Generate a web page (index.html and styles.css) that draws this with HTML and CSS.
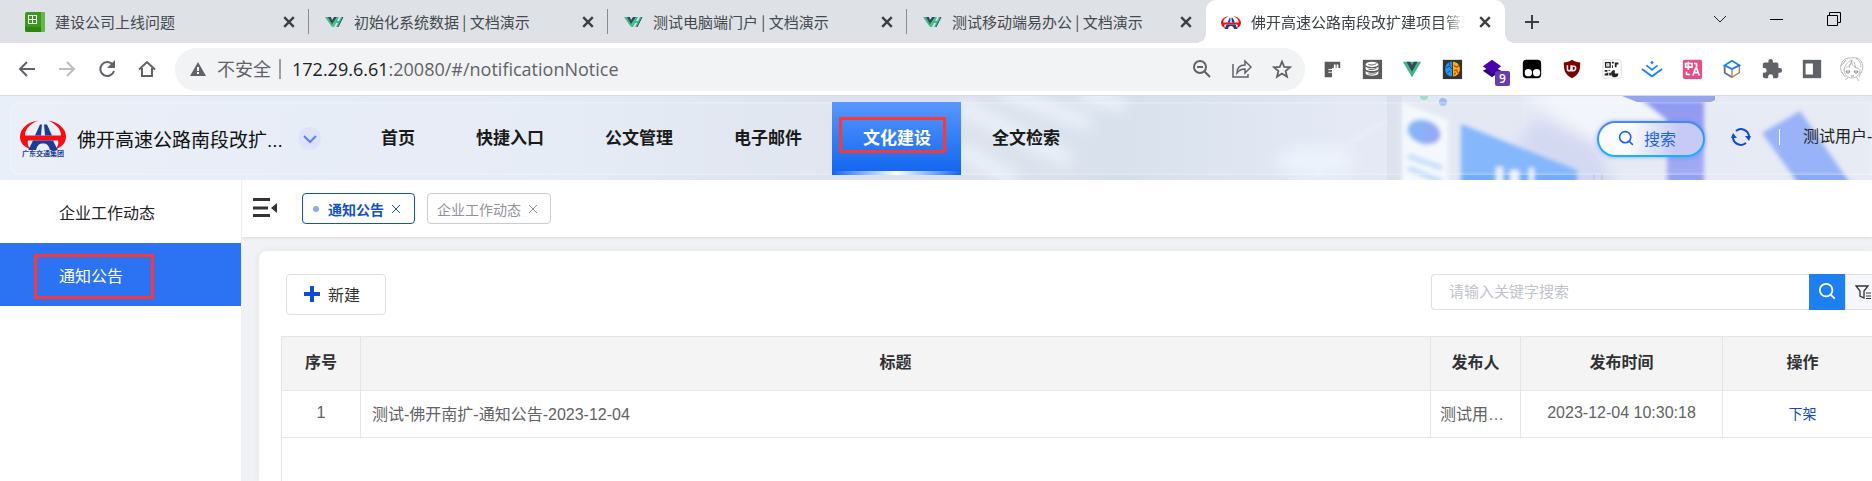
FILE: index.html
```html
<!DOCTYPE html>
<html lang="zh-CN">
<head>
    <meta charset="UTF-8">
    <meta name="viewport" content="width=device-width, initial-scale=1.0">
    <title>佛开高速公路南段改扩建项目管理</title>
    <link rel="stylesheet" href="styles.css">
</head>
<body>
    <!-- shared symbols -->
    <svg class="defs" width="0" height="0" aria-hidden="true">
        <symbol id="i-close" viewBox="0 0 10 10"><path d="M1 1l8 8M9 1l-8 8" fill="none" stroke="currentColor"/></symbol>
        <symbol id="i-vue" viewBox="0 0 20 14">
            <path d="M1 2h4l3 6 3-6h2L8 12z" fill="#41b883"/>
            <path d="M4 2h3l1 3 2-3h3L8 9z" fill="#2f4a5c"/>
            <path d="M13 2h2l-2 4h2l2-4h2l-5 10h-2l2-4h-2l-2 4H8z" fill="#35c08a"/>
            <path d="M19 2l-5 10" stroke="#2f4a5c"/>
        </symbol>
        <symbol id="i-logo" viewBox="0 0 46 30">
            <path d="M18 1C6 3 0 10 0 17c0 7 5 11 11 13-3-3-4-6-3-9h30c1 3 0 6-3 9 6-2 11-6 11-13C46 10 40 3 28 1c9 4 13 9 13 15H5C5 10 9 5 18 1z" fill="#f80d12"/>
            <path d="M20 5h2l-1 11h-6zM24 5h3l5 11h-7z" fill="#1c3c98"/>
            <path d="M13 21h20l5 10h-8c-1-5-3-7-7-7s-6 2-7 7H8z" fill="#1c3c98"/>
        </symbol>
        <symbol id="i-search" viewBox="0 0 20 20"><circle cx="9" cy="9" r="7" fill="none" stroke="currentColor" stroke-width="2"/><path d="M14 14l4 4" stroke="currentColor" stroke-width="2" stroke-linecap="round"/></symbol>
    </svg>

    <div class="tab-strip">
        <div class="tab">
            <svg class="favicon" viewBox="0 0 20 20"><rect width="20" height="20" rx="2" fill="#3a9a1c"/><path d="M16 0h2a2 2 0 012 2v16a2 2 0 01-2 2h-2z" fill="#67b64b"/><path d="M0 15h16v5H2a2 2 0 01-2-2z" fill="#2d8513"/><path d="M3 3h9v9H3z" fill="#fff"/><path d="M4 4h3v3H4zM8 4h3v3H8zM4 8h3v3H4zM8 8h3v3H8z" fill="#3a9a1c"/></svg>
            <span class="tab-title">建设公司上线问题</span>
            <button class="tab-close" aria-label="关闭"><svg><use href="#i-close"/></svg></button>
        </div>
        <div class="tab">
            <svg class="favicon"><use href="#i-vue"/></svg>
            <span class="tab-title">初始化系统数据 | 文档演示</span>
            <button class="tab-close" aria-label="关闭"><svg><use href="#i-close"/></svg></button>
        </div>
        <div class="tab">
            <svg class="favicon"><use href="#i-vue"/></svg>
            <span class="tab-title">测试电脑端门户 | 文档演示</span>
            <button class="tab-close" aria-label="关闭"><svg><use href="#i-close"/></svg></button>
        </div>
        <div class="tab last">
            <svg class="favicon"><use href="#i-vue"/></svg>
            <span class="tab-title">测试移动端易办公 | 文档演示</span>
            <button class="tab-close" aria-label="关闭"><svg><use href="#i-close"/></svg></button>
        </div>
        <div class="tab current">
            <svg class="favicon"><use href="#i-logo"/></svg>
            <span class="tab-title">佛开高速公路南段改扩建项目管理</span>
            <button class="tab-close" aria-label="关闭"><svg><use href="#i-close"/></svg></button>
        </div>
        <button class="new-tab" aria-label="新标签页"><svg width="16" height="16" viewBox="0 0 16 16"><path d="M8 1v14M1 8h14" stroke="#3c4043" stroke-width="2"/></svg></button>
        <div class="window-buttons">
            <button aria-label="搜索标签页"><svg width="14" height="14" viewBox="0 0 14 14"><path d="M1 4l6 6 6-6" fill="none" stroke="#222"/></svg></button>
            <button aria-label="最小化"><svg width="14" height="14" viewBox="0 0 14 14"><path d="M0 7.500h13" stroke="#000"/></svg></button>
            <button aria-label="还原"><svg width="14" height="14" viewBox="0 0 14 14"><path d="M.5 3.500h10v10H.5zM2.500 3V.5h11v10H11" fill="none" stroke="#000"/></svg></button>
        </div>
    </div>

    <div class="toolbar">
        <div class="nav-buttons">
            <button aria-label="后退"><svg width="20" height="20" viewBox="0 0 20 20"><path d="M18 10H3M10 3l-7 7 7 7" fill="none" stroke="#5f6368" stroke-width="2"/></svg></button>
            <button aria-label="前进"><svg width="20" height="20" viewBox="0 0 20 20"><path d="M2 10h15M10 3l7 7-7 7" fill="none" stroke="#bcbec1" stroke-width="2"/></svg></button>
            <button aria-label="刷新"><svg width="20" height="20" viewBox="0 0 20 20"><path d="M16 6a7 7 0 101 6" fill="none" stroke="#5f6368" stroke-width="2"/><path d="M18 1v8h-8z" fill="#5f6368"/></svg></button>
            <button aria-label="主页"><svg width="20" height="20" viewBox="0 0 20 20"><path d="M2 10.500L10 3l8 7.500M5 9v8h10V9" fill="none" stroke="#5f6368" stroke-width="2"/></svg></button>
        </div>
        <div class="omnibox">
            <svg width="16" height="14" viewBox="0 0 16 14"><path d="M8 0l8 14H0z" fill="#5f6368"/><path d="M8 5v4M8 10v2" stroke="#fff" stroke-width="2"/></svg>
            <span class="insecure">不安全</span>
            <span class="url"><b>172.29.6.61</b>:20080/#/notificationNotice</span>
            <div class="omnibox-actions">
                <button aria-label="缩放"><svg width="20" height="20" viewBox="0 0 20 20"><circle cx="8" cy="8" r="6" fill="none" stroke="#5f6368" stroke-width="2"/><path d="M5 8h6M12 12l6 6" stroke="#5f6368" stroke-width="2"/></svg></button>
                <button aria-label="分享"><svg width="20" height="20" viewBox="0 0 20 20"><path d="M1 5v13h15v-3" fill="none" stroke="#5f6368" stroke-width="1.500"/><path d="M5 14c0-5 3-8 8-8V2l6 6-6 6v-4c-4 0-6 1-8 4z" fill="none" stroke="#5f6368" stroke-width="1.500"/></svg></button>
                <button aria-label="收藏"><svg width="20" height="20" viewBox="0 0 20 20"><path d="M10 2.500l2.200 5.300 5.800.5-4.400 3.700 1.400 5.700-5-3.100-5 3.100 1.400-5.700L2 8.300l5.800-.5z" fill="none" stroke="#5f6368" stroke-width="1.800"/></svg></button>
            </div>
        </div>
        <div class="extensions">
            <button aria-label="标尺"><svg viewBox="0 0 24 24"><path d="M4 4h17v7h-2V7h-2v4h-1V7h-2v4h-2v1H8v1h4v2H8v1h4v5H4z" fill="#5a5a5a"/></svg></button>
            <button aria-label="数据库"><svg viewBox="0 0 24 24"><rect x="2" y="2" width="21" height="21" fill="#5b5b5b"/><ellipse cx="12" cy="7" rx="7" ry="3" fill="#fff"/><path d="M5 9c1 3 13 3 14 0v3c-1 3-13 3-14 0zM5 14c1 3 13 3 14 0v3c-1 3-13 3-14 0z" fill="#fff"/><path d="M8 7c2 1 6 1 9-1M8 12c2 1 6 1 9-1M8 17c2 1 6 1 9-1" fill="none" stroke="#5b5b5b"/></svg></button>
            <button aria-label="Vue"><svg viewBox="0 0 24 24"><path d="M2 4h20L12 21z" fill="#41b883"/><path d="M6 4h4l2 4 2-4h4l-6 11z" fill="#34495e"/></svg></button>
            <button aria-label="大脑"><svg viewBox="0 0 24 24"><rect x="2" y="2" width="21" height="21" fill="#333"/><path d="M12 4c-10 0-10 16 0 16z" fill="#2497ee"/><path d="M13 4c10 0 10 16 0 16z" fill="#f6b60e"/><path d="M5 11l4-2 3 3M7 16l3-2M9 5l1 4" stroke="#173b8f" fill="none"/><path d="M14 8l3 2 3-2M14 14l3-1 2 4M16 16l-2 2" stroke="#d44c10" stroke-width="1.500" fill="none"/></svg></button>
            <button aria-label="图层"><svg viewBox="0 0 24 24"><path d="M2 14l10-5 10 5-10 7z" fill="#2a0878"/><path d="M2 9l10-7 10 7-10 8z" fill="#4a04ae"/></svg><span class="badge">9</span></button>
            <button aria-label="脚本"><svg viewBox="0 0 24 24"><rect x="2" y="2" width="20" height="20" rx="4"/><circle cx="8" cy="16" r="4" fill="#fff"/><circle cx="17" cy="16" r="4" fill="#fff"/></svg></button>
            <button aria-label="uBlock"><svg viewBox="0 0 24 24"><path d="M12 2c3 2 6 3 9 3 0 8-1 13-9 17C4 18 3 13 3 5c3 0 6-1 9-3z" fill="#800000"/><path d="M7 8v4q0 2 2 2t2-2V8M12 14V9h2a2 2 0 012 2q0 3-3 3z" fill="none" stroke="#fff" stroke-width="1.600"/></svg></button>
            <button aria-label="二维码"><svg viewBox="0 0 24 24"><rect x="2" y="2" width="20" height="20" rx="2" fill="#fff" stroke="#ddd"/><path d="M5 5h5v5H5z" fill="none" stroke="#222" stroke-width="1.500"/><path d="M7 7h1v1H7zM12 4h2v2h-2zM12 8h1v3h-1zM15 5h4v2h-2v3h-2zM4 13h3v2H4zM8 13h2v1H8zM6 16h2v3H4v-2h2zM9 16h2v3H9z" fill="#222"/><path d="M15 13a4 4 0 104 4h-4z" fill="#222"/></svg></button>
            <button aria-label="掘金"><svg viewBox="0 0 24 24"><path d="M12 3l2 2-2 2-2-2z" fill="#1e80ff"/><path d="M6 8l6 5 6-5M1 12l11 8 11-8" fill="none" stroke="#1e80ff" stroke-width="2"/></svg></button>
            <button aria-label="翻译"><svg viewBox="0 0 24 24"><rect x="2" y="2" width="21" height="21" rx="2" fill="#ea4c89"/><path d="M5 6h7v4H5zM8 4v9M6 15v3h4M14 6h3v4M13 19l3-8h1l3 8M14 16h5" fill="none" stroke="#fff" stroke-width="1.800"/></svg></button>
            <button aria-label="立方体"><svg viewBox="0 0 24 24"><path d="M4 8v8l8 5" fill="none" stroke="#647186" stroke-width="2"/><path d="M12 12v9l8-5V8z" fill="none" stroke="#b9795c" stroke-width="1.500"/><path d="M12 3l8 5-8 4-8-4z" fill="none" stroke="#1880ff" stroke-width="2"/></svg></button>
            <button aria-label="扩展程序"><svg viewBox="0 0 24 24"><path d="M20.500 11H19V7a2 2 0 00-2-2h-4V3.500a2.500 2.500 0 00-5 0V5H4a2 2 0 00-2 2v3.800h1.500a2.700 2.700 0 010 5.400H2V20a2 2 0 002 2h3.800v-1.500a2.700 2.700 0 015.400 0V22H17a2 2 0 002-2v-4h1.500a2.500 2.500 0 000-5z" fill="#5f6368"/></svg></button>
            <button aria-label="侧边栏"><svg viewBox="0 0 24 24"><path d="M2 2h20v20H2z" fill="#5f6368"/><path d="M5 6h8v12H5z" fill="#fff"/></svg></button>
            <button aria-label="用户"><svg class="avatar" viewBox="0 0 26 26"><g fill="none" stroke="#aaa" stroke-width=".8"><path d="M3 17C-1 9 4 1 12 2c9-2 15 6 10 15M5 14c1-6 5-9 8-10-1 4-4 7-6 8M13 4c-1 4 1 7 7 9M2 10l5-6M17 2c3 2 5 5 5 9M5 13c0 6 4 9 8 9s8-3 8-9M3 16l3 5M22 16l-2 5M9 22l-3 2M17 21l3 4M13 5l-3 7M15 6l2 6M4 8l2-3"/><path d="M7 15h4l-1 2H8zM15 15h4l-1 2h-2zM12 20h3" stroke="#777"/></g></svg></button>
        </div>
    </div>

    <header class="app-header">
        <svg class="header-art" viewBox="0 0 1872 84" preserveAspectRatio="xMaxYMid slice" aria-hidden="true">
            <defs>
                <filter id="soft" x="-20%" y="-20%" width="140%" height="140%"><feGaussianBlur stdDeviation="2"/></filter>
                <filter id="softer" x="-20%" y="-50%" width="140%" height="200%"><feGaussianBlur stdDeviation="7"/></filter>
                <linearGradient id="sky" x1="0" x2="1">
                    <stop offset="0" stop-color="#e9eff8"/>
                    <stop offset=".3" stop-color="#e4ebf5"/>
                    <stop offset=".45" stop-color="#dde3ee"/>
                    <stop offset=".6" stop-color="#d5dfeb"/>
                    <stop offset=".72" stop-color="#e2e8f5"/>
                    <stop offset="1" stop-color="#e6eaf4"/>
                </linearGradient>
                <linearGradient id="tower" x2="0" y2="1"><stop offset="0" stop-color="#7c88f0"/><stop offset="1" stop-color="#97a6f4"/></linearGradient>
                <linearGradient id="eye"><stop offset="0" stop-color="#6cb0f8"/><stop offset="1" stop-color="#8c98f5"/></linearGradient>
            </defs>
            <rect width="1872" height="84" fill="url(#sky)"/>
            <g filter="url(#softer)" stroke="#eef4fc" fill="none">
                <path d="M960 10l110 55M1000-6l90 34M960 54l55 30M1080-4l45 14" stroke-width="12"/>
            </g>
            <path d="M1315 84q20-35 75-60" fill="none" stroke="#ecf2fb" stroke-width="2" filter="url(#soft)"/>
            <ellipse cx="1315" cy="65" rx="40" ry="16" fill="#ebf2fc" filter="url(#softer)"/>
            <path d="M1387 0h15v84h-15z" fill="#d6deeb" opacity=".8"/>
            <path d="M1402 0h120v84h-120z" fill="#e1e7f3"/>
            <g filter="url(#softer)">
                <path d="M1522-5h110l60 30v20h-100z" fill="#f4f6fd"/>
                <path d="M1535 22l60 24 20 45h-40l-60-40z" fill="#cfd5f1"/>
            </g>
            <g filter="url(#soft)">
                <path d="M1402 6l46 18v64h-46z" fill="#f5fafe"/>
                <ellipse cx="1424" cy="36" rx="17" ry="12" fill="url(#eye)" transform="rotate(18 1424 36)"/>
                <path d="M1408 60l34 12M1408 72l34 14" stroke="#c2dcf8" stroke-width="6"/>
                <path d="M1461 28l116 46v20h-116z" fill="#72adfd"/>
                <path d="M1496 71h7v20h-7zM1510 74h9v17h-9zM1529 72h5v18h-5z" fill="#eef4ff"/>
                <path d="M1637 0h67v95h-37V24z" fill="url(#tower)"/>
                <path d="M1762 37l38-22 55 79h-52z" fill="#8aa9f8"/>
            </g>
            <path d="M1622 0h93v4l-4 2h-74z" fill="#96a5f2"/>
            <path d="M1594 78v6M1602 78v6" stroke="#b7bfe4"/>
            <circle cx="1424" cy="0" r="4" fill="#9ddec2"/>
            <circle cx="1443" cy="6" r="4" fill="#9fbaf0"/>
        </svg>
        <div class="header-inner">
            <div class="brand">
                <div class="brand-logo">
                    <svg width="46" height="31"><use href="#i-logo"/></svg>
                    <span>广东交通集团</span>
                </div>
                <h1>佛开高速公路南段改扩...</h1>
                <button class="brand-more" aria-label="切换项目"><svg width="14" height="10" viewBox="0 0 14 10"><path d="M1 2l6 6 6-6" fill="none" stroke="#5a83ff" stroke-width="2"/></svg></button>
            </div>
            <nav class="main-nav">
                <a href="#">首页</a>
                <a href="#">快捷入口</a>
                <a href="#">公文管理</a>
                <a href="#">电子邮件</a>
                <a href="#" class="active">文化建设</a>
                <a href="#">全文检索</a>
            </nav>
            <div class="header-right">
                <button class="global-search"><svg width="16" height="16"><use href="#i-search"/></svg>搜索</button>
                <button class="refresh" aria-label="刷新"><svg width="20" height="20" viewBox="0 0 20 20"><path d="M2 11a8 8 0 0013 5M18 9A8 8 0 005 4" fill="none" stroke="#0d4bd8" stroke-width="2"/><path d="M2 6l4 5H0zM18 14l-4-5h6z" fill="#0d4bd8"/></svg></button>
                <span class="user">测试用户-</span>
            </div>
        </div>
    </header>

    <div class="layout">
        <aside class="sidebar">
            <a href="#">企业工作动态</a>
            <a href="#" class="active">通知公告</a>
        </aside>

        <main class="main">
            <div class="tags-bar">
                <button class="fold" aria-label="收起菜单"><svg width="24" height="20" viewBox="0 0 24 20"><path d="M0 1.500h17M0 10h15M0 17.500h17" stroke="#333" stroke-width="3"/><path d="M24 5v10l-6-5z" fill="#333"/></svg></button>
                <span class="tag active">通知公告<button aria-label="关闭"><svg><use href="#i-close"/></svg></button></span>
                <span class="tag">企业工作动态<button aria-label="关闭"><svg><use href="#i-close"/></svg></button></span>
            </div>

            <section class="card">
                <div class="actions">
                    <button class="create"><svg width="16" height="16" viewBox="0 0 16 16"><path d="M8 0v16M0 8h16" stroke="#0d4bd2" stroke-width="4"/></svg>新建</button>
                    <div class="search">
                        <input type="text" placeholder="请输入关键字搜索" aria-label="关键字">
                        <button class="search-btn" aria-label="搜索"><svg width="20" height="20"><use href="#i-search"/></svg></button>
                        <button class="filter-btn" aria-label="筛选"><svg width="16" height="16" viewBox="0 0 16 16"><path d="M1 2h12L9 7v7l-4-2V7z" fill="none" stroke="#333" stroke-width="1.300"/><path d="M11 9h5M11 12h5M11 14.500h5" stroke="#333"/></svg></button>
                    </div>
                </div>
                <div class="table-wrap">
                    <table>
                        <thead>
                            <tr>
                                <th class="col-index">序号</th>
                                <th>标题</th>
                                <th class="col-user">发布人</th>
                                <th class="col-time">发布时间</th>
                                <th class="col-op">操作</th>
                            </tr>
                        </thead>
                        <tbody>
                            <tr>
                                <td>1</td>
                                <td class="title">测试-佛开南扩-通知公告-2023-12-04</td>
                                <td class="publisher">测试用户-1</td>
                                <td>2023-12-04 10:30:18</td>
                                <td><a href="#">下架</a></td>
                            </tr>
                        </tbody>
                    </table>
                </div>
            </section>
        </main>
    </div>
</body>
</html>
```
FILE: styles.css
```css
* {
    margin: 0;
    padding: 0;
    box-sizing: border-box;
}

body {
    font-family: "Liberation Sans", "Noto Sans CJK SC", sans-serif;
    font-size: 16px;
    color: #333;
    height: 100vh;
    display: flex;
    flex-direction: column;
    overflow: hidden;
    background: #f0f2f5;
}

button {
    border: none;
    background: none;
    font: inherit;
    color: inherit;
    display: flex;
    align-items: center;
    justify-content: center;
    cursor: pointer;
}

a {
    color: inherit;
    text-decoration: none;
}

.defs {
    position: absolute;
}

/* browser tabs */
.tab-strip {
    display: flex;
    height: 43px;
    flex-shrink: 0;
    padding-left: 10px;
    background: #dee1e6;
    font-family: "Noto Sans CJK SC", sans-serif;
    font-size: 15px;
    color: #45494d;
}

.tab {
    display: flex;
    align-items: center;
    flex: 0 1 299px;
    min-width: 0;
    padding: 0 14px 0 15px;
    background: linear-gradient(#888c91, #888c91) right center / 1px 25px no-repeat;
}

.tab.last {
    background: none;
}

.tab.current {
    position: relative;
    background: #fff;
    border-radius: 10px 10px 0 0;
}

/* outward curves at the foot of the selected tab */
.tab.current::before,
.tab.current::after {
    content: '';
    position: absolute;
    bottom: 0;
    width: 10px;
    height: 10px;
}

.tab.current::before {
    right: 100%;
    background: radial-gradient(circle at 0 0, transparent 10px, #fff 10px);
}

.tab.current::after {
    left: 100%;
    background: radial-gradient(circle at 100% 0, transparent 10px, #fff 10px);
}

.favicon {
    width: 20px;
    height: 20px;
    margin-right: 10px;
    flex-shrink: 0;
}

.tab-title {
    flex: 1;
    white-space: nowrap;
    overflow: hidden;
    margin-right: 14px;
}

.tab.current .tab-title {
    color: #3c4043;
    mask-image: linear-gradient(to right, #000 90%, transparent);
}

.tab-close {
    width: 12px;
    height: 12px;
    color: #3c4043;
}

.tab-close svg {
    width: 12px;
    height: 12px;
    stroke-width: 2;
}

.new-tab {
    width: 54px;
}

.window-buttons {
    display: flex;
    margin-left: auto;
    margin-right: 10px;
    height: 37px;
}

.window-buttons button {
    width: 57px;
}

/* address bar */
.toolbar {
    display: flex;
    align-items: center;
    height: 53px;
    flex-shrink: 0;
    padding: 0 0 0 7px;
    background: #fff;
    border-bottom: 1px solid #d8d9db;
}

.nav-buttons {
    display: flex;
    width: 168px;
}

.nav-buttons button,
.extensions button,
.omnibox-actions button {
    width: 40px;
    height: 40px;
}

.omnibox {
    flex: 1;
    display: flex;
    align-items: center;
    height: 43px;
    padding: 0 3px 0 15px;
    border-radius: 22px;
    background: #f1f3f4;
    font-family: "Open Sans", "Noto Sans CJK SC", sans-serif;
    font-size: 18px;
    color: #5f6368;
}

.insecure {
    margin-left: 11px;
    padding-right: 8px;
    line-height: 20px;
    border-right: 2px solid #9a9da1;
}

.url {
    margin-left: 11px;
}

.url b {
    font-weight: 400;
    color: #202124;
}

.omnibox-actions {
    display: flex;
    margin-left: auto;
}

.extensions {
    display: flex;
    padding-left: 7px;
}

.extensions button {
    position: relative;
}

.extensions svg {
    width: 22px;
    height: 22px;
}

.extensions .avatar {
    width: 26px;
    height: 26px;
}

.badge {
    position: absolute;
    right: 2px;
    bottom: 3px;
    width: 15px;
    height: 15px;
    border-radius: 2px;
    background: #673ab7;
    color: #fff;
    font: 600 12px/15px "Open Sans", sans-serif;
}

/* app header */
.app-header {
    position: relative;
    height: 84px;
    flex-shrink: 0;
    padding: 6px 0 5px 10px;
    overflow: hidden;
}

.header-art {
    position: absolute;
    inset: 0;
    width: 100%;
    height: 100%;
}

.header-inner {
    position: relative;
    display: flex;
    height: 100%;
    padding-left: 10px;
    border-radius: 10px 0 0 10px;
    background: rgba(240, 242, 245, 0.15);
    box-shadow: inset 0 0 3px 1px rgba(255, 255, 255, 0.4);
}

.brand {
    display: flex;
    align-items: center;
    width: 330px;
}

.brand-logo {
    width: 46px;
    text-align: center;
    color: #1c3c98;
}

.brand-logo svg {
    display: block;
}

.brand-logo span {
    display: block;
    font-size: 7px;
    font-weight: 700;
    line-height: 8px;
    white-space: nowrap;
}

.brand h1 {
    width: 208px;
    margin-left: 11px;
    font-size: 19px;
    font-weight: 400;
    color: #111;
    white-space: nowrap;
}

.brand-more {
    width: 23px;
    height: 23px;
    margin-left: 13px;
    border-radius: 50%;
    background: #dde4f8;
}

.main-nav {
    display: flex;
}

.main-nav a {
    display: flex;
    align-items: center;
    padding: 0 30px 4px 31px;
    font-size: 17px;
    font-weight: 700;
    color: #1a1a1a;
    white-space: nowrap;
}

.main-nav .active {
    position: relative;
    color: #fff;
    background:
        linear-gradient(to right, transparent, #fff, transparent) bottom / 100% 4px no-repeat,
        linear-gradient(#5897ff, #1065ee);
}

/* red highlight frames */
.main-nav .active::after,
.sidebar .active::after {
    content: '';
    position: absolute;
    border: 3px solid #fb3838;
}

.main-nav .active::after {
    inset: 15px 15px 22px 7px;
}

.header-right {
    display: flex;
    align-items: center;
    margin-left: auto;
    color: #222;
}

.global-search {
    width: 108px;
    height: 36px;
    gap: 10px;
    padding: 0 8px 2px 0;
    border: 2px solid transparent;
    border-radius: 18px;
    background:
        linear-gradient(100deg, #fafcff 30%, #c7c9f6 75%) padding-box,
        linear-gradient(#4c84ee, #11b6fa) border-box;
    box-shadow: 0 0 4px rgba(60, 120, 240, 0.5);
    color: #1a62ea;
    white-space: nowrap;
}

.refresh {
    width: 20px;
    margin: 0 28px 4px 26px;
}

.user {
    width: 93px;
    margin-bottom: 4px;
    padding-left: 23px;
    border-left: 1px solid #fff;
    line-height: 16px;
    white-space: nowrap;
}

/* page body */
.layout {
    flex: 1;
    display: flex;
    min-height: 0;
}

.sidebar {
    width: 242px;
    flex-shrink: 0;
    background: #fff;
    border-right: 1px solid #eef0f3;
}

.sidebar a {
    position: relative;
    display: flex;
    align-items: center;
    height: 63px;
    padding: 1px 0 0 59px;
    color: #222;
}

.sidebar .active {
    background: #2b73f3;
    color: #fff;
}

.sidebar .active::after {
    inset: 11px 87px 7px 34px;
}

.main {
    flex: 1;
    display: flex;
    flex-direction: column;
    min-width: 0;
    overflow: hidden;
}

.tags-bar {
    display: flex;
    align-items: center;
    height: 57px;
    flex-shrink: 0;
    padding-left: 11px;
    background: #fff;
    box-shadow: 0 1px 3px rgba(0, 0, 0, 0.1);
}

.fold {
    margin-right: 25px;
    padding-bottom: 2px;
}

.tag {
    display: flex;
    align-items: center;
    height: 31px;
    margin-right: 12px;
    padding: 0 12px 0 9px;
    border: 1px solid #ccc;
    border-radius: 4px;
    font-size: 14px;
    color: #909399;
}

.tag.active {
    padding: 0 13px 0 10px;
    border-color: #1250cc;
    color: #1250cc;
    font-weight: 700;
}

.tag.active::before {
    content: '';
    width: 6px;
    height: 6px;
    margin-right: 9px;
    border-radius: 50%;
    background: #8aabee;
}

.tag button {
    margin-left: 7px;
}

.tag button svg {
    width: 10px;
    height: 10px;
}

.card {
    flex: 1;
    display: flex;
    flex-direction: column;
    margin: 14px 0 0 17px;
    padding: 23px 0 0 22px;
    background: #fff;
    border-radius: 8px 0 0 0;
    box-shadow: 0 0 8px rgba(0, 0, 0, 0.06);
}

.actions {
    display: flex;
    align-items: flex-start;
    justify-content: space-between;
    padding-left: 5px;
    margin-bottom: 21px;
}

.create {
    width: 100px;
    height: 41px;
    padding: 0 8px 2px 0;
    gap: 8px;
    border: 1px solid #dcdfe6;
    border-radius: 4px;
}

.search {
    display: flex;
    height: 36px;
}

.search input {
    width: 378px;
    padding: 0 17px 2px;
    border: 1px solid #dcdfe6;
    border-right: none;
    border-radius: 4px 0 0 4px;
    font: inherit;
    font-size: 15px;
    color: #333;
}

.search input::placeholder {
    color: #bfc3cb;
}

.search-btn {
    width: 36px;
    padding-bottom: 2px;
    background: #1e80f0;
    color: #fff;
}

.search-btn svg {
    width: 18px;
    height: 18px;
}

.filter-btn {
    width: 27px;
    padding-left: 8px;
    border: 1px solid #dcdfe6;
    border-right: none;
    background: #f5f7fa;
}

.table-wrap {
    flex: 1;
    border-left: 1px solid #dfe6ec;
    overflow: hidden;
}

/* the last column runs past the window edge */
table {
    width: calc(100% + 11px);
    border-spacing: 0;
    table-layout: fixed;
    text-align: center;
}

th,
td {
    border-right: 1px solid #dfe6ec;
    border-bottom: 1px solid #dfe6ec;
}

th {
    height: 55px;
    padding-bottom: 5px;
    border-top: 1px solid #dfe6ec;
    background: #f4f4f4;
    color: #303133;
}

td {
    height: 47px;
    padding-bottom: 2px;
    color: #606266;
    white-space: nowrap;
}

td a {
    font-size: 14px;
    color: #0d4bd2;
}

.col-index {
    width: 79px;
}

.col-user {
    width: 90px;
}

.col-time {
    width: 202px;
}

.col-op {
    width: 160px;
}

td.title {
    padding-left: 11px;
    text-align: left;
}

td.publisher {
    padding: 0 9px 2px;
    text-align: left;
    overflow: hidden;
    text-overflow: ellipsis;
}
```
